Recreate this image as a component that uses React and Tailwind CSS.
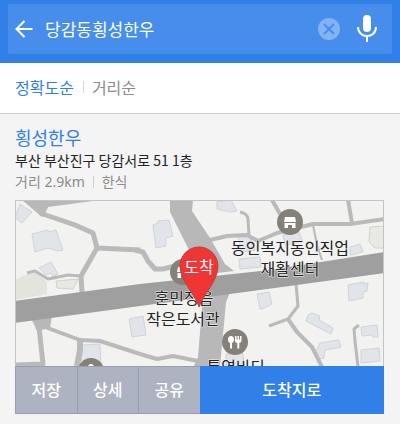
import React, { useState } from 'react';

const buildings = [
  '20,204 32,212 22,223 15,218',
  '32,234 48,230 49,232 56,230 63,250 57,251 48,248 35,252',
  '39,268 51,262 58,274 53,277 51,273 46,275',
  '153,225 158,223 158,221 169,220 173,236 166,238 166,246 156,248',
  '217,202 231,200 237,211 230,212 217,209',
  '238,237 250,237 255,250 242,252',
  '283,235 299,232 303,242 285,245',
  '239,259 260,257 261,267 240,269',
  '257,294 269,292 272,304 262,309 260,309',
  '348,285 364,282 364,284 368,283 367,291 363,292 363,298 349,301',
  '350,247 360,244 363,252 350,255',
  '82,345 100,344 101,366 81,360',
  '129,319 143,316 146,335 132,337',
  '308,315 312,313 320,316 319,320 333,328 331,334 306,321',
  '320,343 339,340 341,347 325,350 324,358 318,359 316,351',
  '361,327 377,325 378,337 373,337 372,335 362,336',
  '361,350 379,348 380,361 361,363',
  '226,354 243,353 244,366 226,366',
];

const plots = [
  '56,281 78,279 73,289 57,288',
  '370,227 385,226 385,248 375,248 369,242',
];

const roads = [
  { d: 'M40 213 L75 225 L93 233 L97 248 L140 250', width: 5 },
  { d: 'M135 250 L143 252 L148 261 L155 269 L163 269 L175 266', width: 5 },
  { d: 'M97 248 L81 276 L82 292', width: 5 },
  { d: 'M27 273 L35 271 L48 279 L68 275 L81 276', width: 3 },
  { d: 'M45 327 L80 340 L100 341 L140 354 L157 359 L173 356 L198 361', width: 4 },
  { d: 'M39 327 L43 364 L15 365', width: 5 },
  { d: 'M80 340 L80 350 L77 366', width: 6 },
  { d: 'M210 240 L227 236 L247 235 L258 241 L277 233 L313 224 L350 224 L385 219', width: 4 },
  { d: 'M240 212 Q247 213 248 219 L249 235', width: 3 },
  { d: 'M348 200 L352 223', width: 4 },
  { d: 'M272 200 L280 214', width: 4 },
  { d: 'M313 225 L317 245 L322 260', width: 2 },
  { d: 'M296 284 L298 306 L288 319 L269 326', width: 3 },
  { d: 'M288 319 L297 332 L312 347 L322 367', width: 4 },
  { d: 'M359 325 L354 329 L355 341 L358 367', width: 3 },
];

const actions = ['저장', '상세', '공유'];

const ShopIcon = ({ x, y }) => (
  <g transform={`translate(${x} ${y})`}>
    <circle r="13" fill="#858178" />
    <path d="M-5 -5H5L6 0H-6Z" fill="#fff" />
    <path d="M-5.500 1H5.500V6H2V3H-2V6H-5.500Z" fill="#fff" />
  </g>
);

const FoodIcon = ({ x, y }) => (
  <g transform={`translate(${x} ${y})`}>
    <circle r="13" fill="#858178" />
    <ellipse cx="-4" cy="-2.500" rx="3" ry="3.500" fill="#fff" />
    <path d="M-5 0H-3V6.500H-5Z" fill="#fff" />
    <path d="M0 -6H1.500V-2.500H2.500V-6H4V-2.500H5V-6H6.500V-1Q6.500 .5 4.300 1V6.500H2.300V1Q0 .5 0 -1Z" fill="#fff" />
  </g>
);

const MapLabel = ({ x, y, children }) => (
  <text
    x={x}
    y={y}
    textAnchor="middle"
    className="text-[16px] font-normal"
    fill="#222"
    stroke="#f2f2f1"
    strokeWidth="1"
    strokeLinejoin="round"
    paintOrder="stroke"
  >
    {children}
  </text>
);

const MapView = () => (
  <svg viewBox="16 201 367 165" className="block w-full" role="img" aria-label="지도">
    <rect x="15" y="200" width="370" height="167" fill="#f2f2f1" />
    <polygon points="15,280 28,274 37,273 47,282 47,294 20,299 15,300" fill="#e3e4dc" />
    {plots.map((p) => (
      <polygon key={p} points={p} fill="#e9e9e3" stroke="#d2d2cc" strokeWidth="1" />
    ))}
    {buildings.map((p) => (
      <polygon key={p} points={p} fill="#e1e5ea" stroke="#cfd4d9" strokeWidth="1" />
    ))}
    <g fill="none" stroke="#bababa" strokeLinejoin="round">
      {roads.map((r) => (
        <path key={r.d} d={r.d} strokeWidth={r.width} />
      ))}
    </g>
    <g fill="#b8b8b8">
      <polygon points="22,200 100,200 48,207 45,214 42,217" />
      <polygon points="170,200 193,200 192,211 210,238 225,264 234,271 200,275 193,258 180,232 170,212" />
      <polygon points="203,296 231,290 226,302 220,366 194,366 198,357" />
      <polygon points="32,320 52,316 50,328 37,331" />
    </g>
    <polygon points="15,301 140,284 270,270 385,252 385,273 260,290 140,306 15,323" fill="#9f9f9f" />

    <ShopIcon x={290} y={222} />
    <ShopIcon x={183} y={272} />
    <FoodIcon x={235} y={342} />
    <g transform="translate(91 371)">
      <circle r="13" fill="#858178" />
      <circle cy="-4" r="3" fill="#fff" />
    </g>

    <MapLabel x={290} y={254}>동인복지동인직업</MapLabel>
    <MapLabel x={290} y={275}>재활센터</MapLabel>
    <MapLabel x={184} y={304}>훈민정음</MapLabel>
    <MapLabel x={183} y={325}>작은도서관</MapLabel>
    <MapLabel x={236} y={373}>통영바다</MapLabel>

    <path
      d="M199 307 C196 295 180 281 180 266 A19 19 0 0 1 218 266 C218 281 203 295 199 307Z"
      fill="#f03535"
      stroke="#b94040"
      strokeWidth="1"
    />
    <text x="199" y="273" textAnchor="middle" className="text-[16px]" fill="#fff">
      도착
    </text>
  </svg>
);

const App = () => {
  const [query, setQuery] = useState('당감동횡성한우');
  const [sort, setSort] = useState('accuracy');

  return (
    <div className="min-h-screen bg-[#f4f4f4] font-['Noto_Sans_CJK_KR',sans-serif]">
      <header className="bg-[#3080e8] px-2 pt-1 pb-[9px]">
        <form
          className="flex h-[50px] items-center rounded-xs bg-[#478eec] pr-[14px] pl-[7px]"
          onSubmit={(e) => e.preventDefault()}
        >
          <button type="button" aria-label="뒤로">
            <svg width="18" height="18" viewBox="0 0 18 18" fill="none" stroke="#fff" strokeWidth="2">
              <path d="M9.500 1 L1.500 9 L9.500 17 M1.500 9 H17.500" />
            </svg>
          </button>
          <input
            type="text"
            aria-label="검색어"
            value={query}
            onChange={(e) => setQuery(e.target.value)}
            className="ml-3 min-w-0 flex-1 bg-transparent text-[17px] leading-6 text-white outline-none"
          />
          <button type="button" aria-label="지우기" onClick={() => setQuery('')}>
            <svg width="22" height="22" viewBox="0 0 22 22">
              <circle cx="11" cy="11" r="11" fill="#83b3f2" />
              <path d="M6 6 L16 16 M16 6 L6 16" stroke="#478eec" strokeWidth="2" />
            </svg>
          </button>
          <button type="button" aria-label="음성 검색" className="ml-4">
            <svg width="22" height="28" viewBox="0 0 22 28" fill="none">
              <rect x="7" y="0" width="8" height="17" rx="4" fill="#fff" />
              <path d="M2 12 C2 24 20 24 20 12 M11 21 V27" stroke="#fff" strokeWidth="2" />
            </svg>
          </button>
        </form>
      </header>

      <nav className="flex h-[51px] items-center border-b border-[#cfcfcf] bg-white px-[15px] pb-[2px] text-[16px] leading-6">
        <button
          type="button"
          onClick={() => setSort('accuracy')}
          className={sort === 'accuracy' ? 'text-[#2f80e8]' : 'text-[#8c8c8c]'}
        >
          정확도순
        </button>
        <span className="mr-2 ml-[9px] h-3 w-px bg-[#d5d5d5]" />
        <button
          type="button"
          onClick={() => setSort('distance')}
          className={sort === 'distance' ? 'text-[#2f80e8]' : 'text-[#8c8c8c]'}
        >
          거리순
        </button>
      </nav>

      <main className="pt-[11px] pr-4 pb-2 pl-[15px]">
        <h1 className="text-[18px] leading-6 font-normal text-[#2f80e8]">횡성한우</h1>
        <p className="text-[14px] leading-[22px] text-[#222]">부산 부산진구 당감서로 51 1층</p>
        <p className="flex items-center font-['Noto_Sans','Noto_Sans_CJK_KR',sans-serif] text-[14px] leading-[22px] text-[#8c8c8c]">
          거리 2.9km
          <span className="mx-2 h-3 w-px bg-[#cfcfcf]" />
          한식
        </p>

        <section className="mt-[7px]">
          <div className="border border-b-0 border-[#c4c4c4]">
            <MapView />
          </div>
          <div className="grid h-12 grid-cols-6 text-[16px] leading-6 font-medium text-white">
            {actions.map((label) => (
              <button key={label} type="button" className="border border-r-0 border-[#989eae] bg-[#adb3c1] pb-[2px]">
                {label}
              </button>
            ))}
            <button type="button" className="col-span-3 bg-[#3080e8] pb-[2px]">
              도착지로
            </button>
          </div>
        </section>
      </main>
    </div>
  );
};

export default App;
